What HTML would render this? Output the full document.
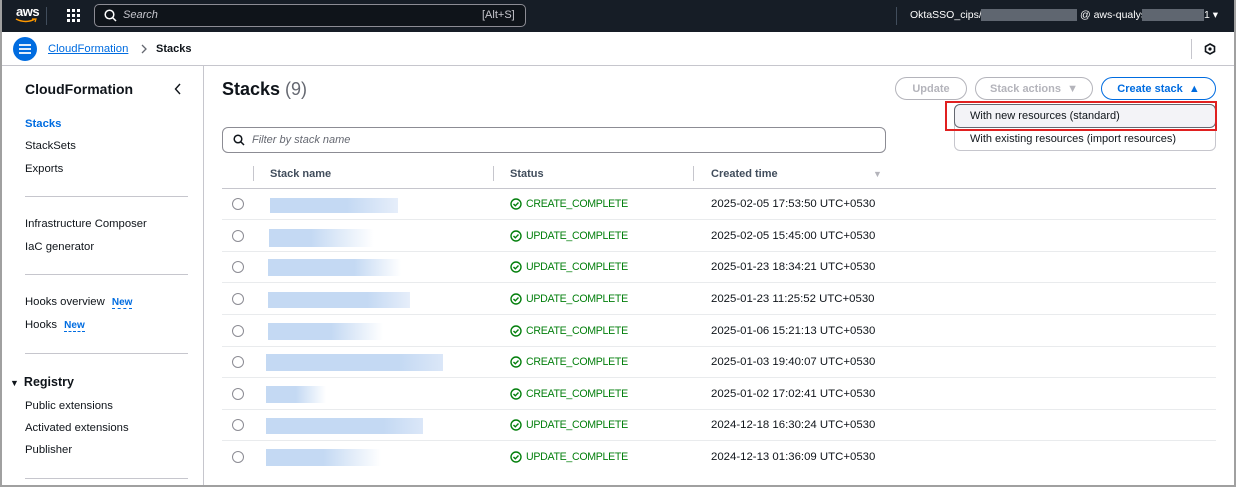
<!DOCTYPE html>
<html><head><meta charset="utf-8"><style>
*{box-sizing:border-box;margin:0;padding:0}
body{width:1236px;height:487px;overflow:hidden;background:#fff;font-family:"Liberation Sans",Arial,sans-serif;position:relative;color:#0f141a}
.a{position:absolute;white-space:nowrap}
.frame{position:absolute;left:0;top:0;width:1236px;height:487px;border:2px solid #a0a0a0;border-top:none;pointer-events:none}
.top{position:absolute;left:0;top:0;width:1236px;height:32px;background:#161d26}
.nav{font-size:11.3px;color:#0f141a}
.hr{position:absolute;left:25px;width:163px;height:1px;background:#c6c6cd}
.new{color:#006ce0;font-weight:bold;font-size:10px;border-bottom:1px dashed #006ce0}
.row{position:absolute;left:222px;width:994px;height:1px;background:#e9ebed}
.radio{position:absolute;left:232px;width:12px;height:12px;border:1.5px solid #8c8c94;border-radius:50%}
.bar{position:absolute;height:15px}
.st{position:absolute;left:510px;font-size:10.6px;color:#037f0c;letter-spacing:-0.3px}
.st svg{vertical-align:-3px;margin-right:4px}
.dt{position:absolute;left:711px;font-size:11.4px;color:#0f141a}
.btn{position:absolute;top:77px;height:23px;border-radius:12px;font-size:11px;font-weight:bold;text-align:center;line-height:21px}
</style></head><body>
<div class="top"></div>
<div class="a" style="left:16px;top:4px;color:#fff;font-size:13px;font-weight:bold;letter-spacing:-0.5px">aws</div>
<svg class="a" style="left:15px;top:18px" width="22" height="6"><path d="M1 1 Q11 6 20 1" stroke="#ff9900" fill="none" stroke-width="1.5"/><path d="M17 1 L21 1 L20 4" stroke="#ff9900" fill="none" stroke-width="1.2"/></svg>
<div class="a" style="left:46px;top:7px;width:1px;height:18px;background:#414d5c"></div>
<svg class="a" style="left:67px;top:9px" width="14" height="14" fill="#fff"><rect x="0" y="0" width="3" height="3"/><rect x="5" y="0" width="3" height="3"/><rect x="10" y="0" width="3" height="3"/><rect x="0" y="5" width="3" height="3"/><rect x="5" y="5" width="3" height="3"/><rect x="10" y="5" width="3" height="3"/><rect x="0" y="10" width="3" height="3"/><rect x="5" y="10" width="3" height="3"/><rect x="10" y="10" width="3" height="3"/></svg>
<div class="a" style="left:94px;top:4px;width:432px;height:23px;border:1px solid #8c8c94;border-radius:5px;background:#0f141a"></div>
<svg class="a" style="left:104px;top:9px" width="13" height="13"><circle cx="5.5" cy="5.5" r="4.3" stroke="#fff" stroke-width="1.5" fill="none"/><path d="M8.5 8.5 L12 12" stroke="#fff" stroke-width="1.5"/></svg>
<div class="a" style="left:123px;top:9px;color:#c6c6cd;font-size:11px;font-style:italic">Search</div>
<div class="a" style="left:482px;top:9px;color:#c6c6cd;font-size:11px">[Alt+S]</div>
<div class="a" style="left:896px;top:7px;width:1px;height:18px;background:#414d5c"></div>
<div class="a" style="left:910px;top:9px;color:#fff;font-size:10.5px">OktaSSO_cips/s</div>
<div class="a" style="left:981px;top:9px;width:96px;height:12px;background:#5f6670"></div>
<div class="a" style="left:1080px;top:9px;color:#fff;font-size:10.5px">@ aws-qualys</div>
<div class="a" style="left:1142px;top:9px;width:62px;height:12px;background:#5f6670"></div>
<div class="a" style="left:1204px;top:9px;color:#fff;font-size:10.5px">1 ▾</div>

<div class="a" style="left:13px;top:37px;width:24px;height:24px;border-radius:50%;background:#006ce0"></div>
<svg class="a" style="left:19px;top:44px" width="12" height="10"><path d="M0 1H12M0 5H12M0 9H12" stroke="#fff" stroke-width="1.8"/></svg>
<div class="a" style="left:48px;top:43px;font-size:11.3px;color:#006ce0;text-decoration:underline">CloudFormation</div>
<svg class="a" style="left:140px;top:44px" width="8" height="10"><path d="M2 1L6 5L2 9" stroke="#656871" fill="none" stroke-width="1.3"/></svg>
<div class="a" style="left:156px;top:43px;font-size:11px;font-weight:bold;color:#0f141a">Stacks</div>
<div class="a" style="left:1191px;top:39px;width:1px;height:20px;background:#c6c6cd"></div>
<svg class="a" style="left:1204px;top:43px" width="12" height="12"><path d="M6 1L10.5 3.5V8.5L6 11L1.5 8.5V3.5Z" stroke="#0f141a" stroke-width="1.6" fill="none"/><circle cx="6" cy="6" r="1.6" fill="#0f141a"/></svg>
<div class="a" style="left:0;top:65px;width:1236px;height:1px;background:#c6c6cd"></div>

<div class="a" style="left:203px;top:66px;width:1px;height:421px;background:#c6c6cd"></div>
<div class="a" style="left:25px;top:81px;font-size:14px;font-weight:bold">CloudFormation</div>
<svg class="a" style="left:174px;top:83px" width="8" height="12"><path d="M6 1L1.5 6L6 11" stroke="#0f141a" fill="none" stroke-width="1.4"/></svg>
<div class="a nav" style="left:25px;top:118px;color:#006ce0;font-weight:bold">Stacks</div>
<div class="a nav" style="left:25px;top:140px">StackSets</div>
<div class="a nav" style="left:25px;top:163px">Exports</div>
<div class="hr" style="top:196px"></div>
<div class="a nav" style="left:25px;top:218px">Infrastructure Composer</div>
<div class="a nav" style="left:25px;top:241px">IaC generator</div>
<div class="hr" style="top:274px"></div>
<div class="a nav" style="left:25px;top:296px">Hooks overview <span class="new" style="margin-left:4px">New</span></div>
<div class="a nav" style="left:25px;top:319px">Hooks <span class="new" style="margin-left:4px">New</span></div>
<div class="hr" style="top:353px"></div>
<div class="a" style="left:10px;top:375px;font-size:12.5px;font-weight:bold"><span style="font-size:9px;margin-right:5px">▼</span>Registry</div>
<div class="a nav" style="left:25px;top:400px">Public extensions</div>
<div class="a nav" style="left:25px;top:422px">Activated extensions</div>
<div class="a nav" style="left:25px;top:444px">Publisher</div>
<div class="hr" style="top:478px"></div>

<div class="a" style="left:222px;top:79px;font-size:18px;font-weight:bold">Stacks <span style="font-weight:normal;color:#656871">(9)</span></div>
<div class="btn" style="left:895px;width:72px;border:1px solid #b4b4bb;color:#b4b4bb;line-height:22px">Update</div>
<div class="btn" style="left:975px;width:118px;border:1px solid #b4b4bb;color:#b4b4bb;line-height:22px">Stack actions&nbsp; ▼</div>
<div class="btn" style="left:1101px;width:115px;border:1px solid #006ce0;color:#006ce0;line-height:22px">Create stack&nbsp; ▲</div>
<div class="a" style="left:954px;top:104px;width:262px;height:47px;border:1px solid #c6c6cd;border-radius:6px;background:#fff"></div>
<div class="a" style="left:954px;top:104px;width:262px;height:24px;border:1px solid #656871;border-radius:6px;background:#f3f3f7"></div>
<div class="a" style="left:945px;top:101px;width:272px;height:30px;border:2px solid #e02020"></div>
<div class="a" style="left:970px;top:110px;font-size:11px">With new resources (standard)</div>
<div class="a" style="left:970px;top:133px;font-size:11px">With existing resources (import resources)</div>

<div class="a" style="left:222px;top:127px;width:664px;height:26px;border:1px solid #8c8c94;border-radius:6px"></div>
<svg class="a" style="left:233px;top:134px" width="12" height="12"><circle cx="5" cy="5" r="3.8" stroke="#0f141a" stroke-width="1.5" fill="none"/><path d="M8 8L11 11" stroke="#0f141a" stroke-width="1.5"/></svg>
<div class="a" style="left:252px;top:134px;font-size:11px;font-style:italic;color:#656871">Filter by stack name</div>

<div class="a" style="left:253px;top:166px;width:1px;height:15px;background:#c6c6cd"></div>
<div class="a" style="left:270px;top:168px;font-size:11px;font-weight:bold;color:#414d5c">Stack name</div>
<div class="a" style="left:493px;top:166px;width:1px;height:15px;background:#c6c6cd"></div>
<div class="a" style="left:510px;top:168px;font-size:11px;font-weight:bold;color:#414d5c">Status</div>
<div class="a" style="left:693px;top:166px;width:1px;height:15px;background:#c6c6cd"></div>
<div class="a" style="left:711px;top:168px;font-size:11px;font-weight:bold;color:#414d5c">Created time</div>
<div class="a" style="left:873px;top:169px;font-size:9px;color:#b4b4bb">▼</div>
<div class="row" style="top:188px;background:#c6c6cd"></div>

<div class="radio" style="top:198px"></div><div class="bar" style="left:270px;top:198px;width:128px;background:linear-gradient(90deg,#c4d9f3 60%,#e6eefa)"></div>
<div class="st" style="top:198px"><svg width="12" height="12"><circle cx="6" cy="6" r="5" stroke="#037f0c" stroke-width="1.4" fill="none"/><path d="M3.5 6L5.3 7.8L8.5 4.5" stroke="#037f0c" stroke-width="1.4" fill="none"/></svg>CREATE_COMPLETE</div>
<div class="dt" style="top:198px">2025-02-05 17:53:50 UTC+0530</div>
<div class="row" style="top:219px"></div>

<div class="radio" style="top:230px"></div><div class="bar" style="left:269px;top:229px;width:105px;height:18px;background:linear-gradient(90deg,#c4d9f3 40%,#fff)"></div>
<div class="st" style="top:230px"><svg width="12" height="12"><circle cx="6" cy="6" r="5" stroke="#037f0c" stroke-width="1.4" fill="none"/><path d="M3.5 6L5.3 7.8L8.5 4.5" stroke="#037f0c" stroke-width="1.4" fill="none"/></svg>UPDATE_COMPLETE</div>
<div class="dt" style="top:230px">2025-02-05 15:45:00 UTC+0530</div>
<div class="row" style="top:251px"></div>

<div class="radio" style="top:261px"></div><div class="bar" style="left:268px;top:259px;width:133px;height:17px;background:linear-gradient(90deg,#c4d9f3 65%,#fff)"></div>
<div class="st" style="top:261px"><svg width="12" height="12"><circle cx="6" cy="6" r="5" stroke="#037f0c" stroke-width="1.4" fill="none"/><path d="M3.5 6L5.3 7.8L8.5 4.5" stroke="#037f0c" stroke-width="1.4" fill="none"/></svg>UPDATE_COMPLETE</div>
<div class="dt" style="top:261px">2025-01-23 18:34:21 UTC+0530</div>
<div class="row" style="top:282px"></div>

<div class="radio" style="top:293px"></div><div class="bar" style="left:268px;top:292px;width:142px;height:16px;background:linear-gradient(90deg,#c4d9f3 70%,#e6eefa)"></div>
<div class="st" style="top:293px"><svg width="12" height="12"><circle cx="6" cy="6" r="5" stroke="#037f0c" stroke-width="1.4" fill="none"/><path d="M3.5 6L5.3 7.8L8.5 4.5" stroke="#037f0c" stroke-width="1.4" fill="none"/></svg>UPDATE_COMPLETE</div>
<div class="dt" style="top:293px">2025-01-23 11:25:52 UTC+0530</div>
<div class="row" style="top:314px"></div>

<div class="radio" style="top:325px"></div><div class="bar" style="left:268px;top:323px;width:115px;height:17px;background:linear-gradient(90deg,#c4d9f3 55%,#fff)"></div>
<div class="st" style="top:325px"><svg width="12" height="12"><circle cx="6" cy="6" r="5" stroke="#037f0c" stroke-width="1.4" fill="none"/><path d="M3.5 6L5.3 7.8L8.5 4.5" stroke="#037f0c" stroke-width="1.4" fill="none"/></svg>CREATE_COMPLETE</div>
<div class="dt" style="top:325px">2025-01-06 15:21:13 UTC+0530</div>
<div class="row" style="top:346px"></div>

<div class="radio" style="top:356px"></div><div class="bar" style="left:266px;top:354px;width:177px;height:17px;background:linear-gradient(90deg,#c4d9f3 75%,#dbe7f8)"></div>
<div class="st" style="top:356px"><svg width="12" height="12"><circle cx="6" cy="6" r="5" stroke="#037f0c" stroke-width="1.4" fill="none"/><path d="M3.5 6L5.3 7.8L8.5 4.5" stroke="#037f0c" stroke-width="1.4" fill="none"/></svg>CREATE_COMPLETE</div>
<div class="dt" style="top:356px">2025-01-03 19:40:07 UTC+0530</div>
<div class="row" style="top:377px"></div>

<div class="radio" style="top:388px"></div><div class="bar" style="left:266px;top:386px;width:60px;height:17px;background:linear-gradient(90deg,#c4d9f3 50%,#fff)"></div>
<div class="st" style="top:388px"><svg width="12" height="12"><circle cx="6" cy="6" r="5" stroke="#037f0c" stroke-width="1.4" fill="none"/><path d="M3.5 6L5.3 7.8L8.5 4.5" stroke="#037f0c" stroke-width="1.4" fill="none"/></svg>CREATE_COMPLETE</div>
<div class="dt" style="top:388px">2025-01-02 17:02:41 UTC+0530</div>
<div class="row" style="top:409px"></div>

<div class="radio" style="top:419px"></div><div class="bar" style="left:266px;top:418px;width:157px;height:16px;background:linear-gradient(90deg,#c4d9f3 75%,#dbe7f8)"></div>
<div class="st" style="top:419px"><svg width="12" height="12"><circle cx="6" cy="6" r="5" stroke="#037f0c" stroke-width="1.4" fill="none"/><path d="M3.5 6L5.3 7.8L8.5 4.5" stroke="#037f0c" stroke-width="1.4" fill="none"/></svg>UPDATE_COMPLETE</div>
<div class="dt" style="top:419px">2024-12-18 16:30:24 UTC+0530</div>
<div class="row" style="top:440px"></div>

<div class="radio" style="top:451px"></div><div class="bar" style="left:266px;top:449px;width:115px;height:17px;background:linear-gradient(90deg,#c4d9f3 50%,#fff)"></div>
<div class="st" style="top:451px"><svg width="12" height="12"><circle cx="6" cy="6" r="5" stroke="#037f0c" stroke-width="1.4" fill="none"/><path d="M3.5 6L5.3 7.8L8.5 4.5" stroke="#037f0c" stroke-width="1.4" fill="none"/></svg>UPDATE_COMPLETE</div>
<div class="dt" style="top:451px">2024-12-13 01:36:09 UTC+0530</div>

<div class="frame"></div>
</body></html>
